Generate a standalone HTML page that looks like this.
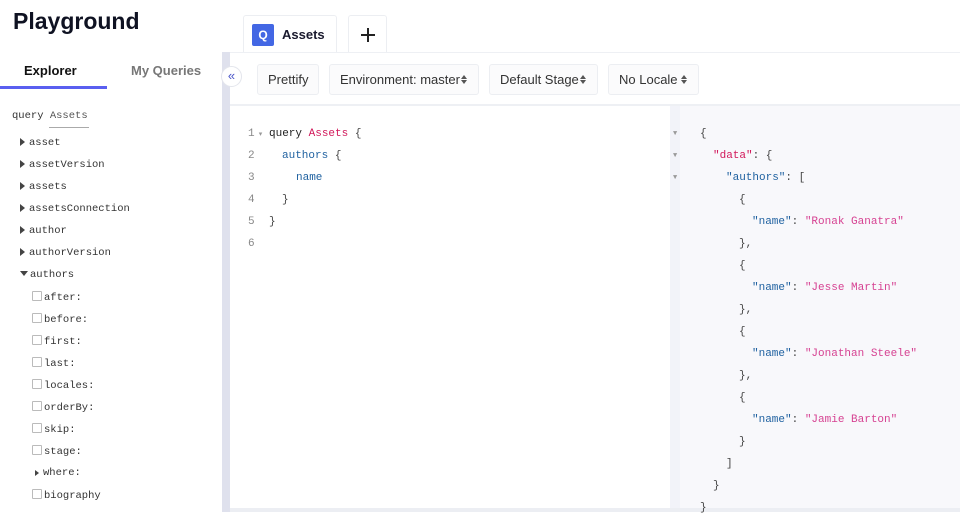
<!DOCTYPE html>
<html><head><style>
*{margin:0;padding:0;box-sizing:border-box}
body{width:960px;height:512px;overflow:hidden;background:#fff;font-family:"Liberation Sans",sans-serif;position:relative;color:#1a1a2e}
.abs{position:absolute}
.mono{font-family:"Liberation Mono",monospace}
.side{left:0;top:0;width:222px;height:512px;background:#fff}
h1{position:absolute;left:13px;top:8px;font-size:23px;font-weight:700;color:#0f1222}
.tab{position:absolute;top:63px;font-size:13px;font-weight:700}
.tree{position:absolute;left:0;top:0;font-size:10.5px;color:#333}
.tree div{position:absolute;white-space:nowrap}
.tri{display:inline-block;width:0;height:0;border-top:4px solid transparent;border-bottom:4px solid transparent;border-left:5px solid #444;margin-right:4px;vertical-align:-1px}
.trid{display:inline-block;width:0;height:0;border-left:4px solid transparent;border-right:4px solid transparent;border-top:5px solid #444;margin-right:2px;vertical-align:1px}
.cb{display:inline-block;width:10px;height:10px;border:1px solid #bbb;border-radius:1px;margin-right:2px;vertical-align:-1px}
.btn{position:absolute;top:64px;height:31px;border:1px solid #eceef2;border-radius:3px;background:#fbfbfc;font-size:13px;color:#333;line-height:29px;padding:0 10px;white-space:nowrap}
.ar{position:absolute;right:10px;top:10px;width:7px;height:10px}
.ar:before{content:"";position:absolute;left:0;top:0;border-left:3.5px solid transparent;border-right:3.5px solid transparent;border-bottom:4px solid #555}
.ar:after{content:"";position:absolute;left:0;top:5px;border-left:3.5px solid transparent;border-right:3.5px solid transparent;border-top:4px solid #555}
.code div{position:absolute;white-space:nowrap;font-size:11px;line-height:14px}
.num{color:#888}
.kw{color:#222}.def{color:#d1185a}.fld{color:#1f61a0}.str{color:#d64292}.pun{color:#444}
</style></head><body>
<div class="abs side">
<h1>Playground</h1>
<div class="tab" style="left:24px;color:#111">Explorer</div>
<div class="tab" style="left:131px;color:#777">My Queries</div>
<div class="abs" style="left:0;top:86px;width:107px;height:3px;background:#5a5ff0"></div>
<div class="tree mono">
<div style="left:12px;top:110px">query <span style="color:#555">Assets</span></div>
<div style="left:49px;top:127px;width:40px;height:1px;background:#aaa"></div>
<div style="left:20px;top:137px"><span class="tri"></span>asset</div>
<div style="left:20px;top:159px"><span class="tri"></span>assetVersion</div>
<div style="left:20px;top:181px"><span class="tri"></span>assets</div>
<div style="left:20px;top:203px"><span class="tri"></span>assetsConnection</div>
<div style="left:20px;top:225px"><span class="tri"></span>author</div>
<div style="left:20px;top:247px"><span class="tri"></span>authorVersion</div>
<div style="left:20px;top:269px"><span class="trid"></span>authors</div>
<div style="left:32px;top:291px"><span class="cb"></span>after:</div>
<div style="left:32px;top:313px"><span class="cb"></span>before:</div>
<div style="left:32px;top:335px"><span class="cb"></span>first:</div>
<div style="left:32px;top:357px"><span class="cb"></span>last:</div>
<div style="left:32px;top:379px"><span class="cb"></span>locales:</div>
<div style="left:32px;top:401px"><span class="cb"></span>orderBy:</div>
<div style="left:32px;top:423px"><span class="cb"></span>skip:</div>
<div style="left:32px;top:445px"><span class="cb"></span>stage:</div>
<div style="left:35px;top:467px"><span class="tri" style="border-top-width:3.5px;border-bottom-width:3.5px;border-left-width:4px"></span>where:</div>
<div style="left:32px;top:489px"><span class="cb"></span>biography</div>
</div>
</div>
<div class="abs" style="left:222px;top:52px;width:8px;height:460px;background:#dfe1ed"></div>
<div class="abs" style="left:221px;top:66px;width:21px;height:21px;border-radius:50%;background:#fff;border:1px solid #e3e5ec;font-size:13px;color:#4a55c8;text-align:center;line-height:18px">«</div>
<!-- tabs -->
<div class="abs" style="left:243px;top:15px;width:94px;height:38px;border:1px solid #eceef2;border-bottom:none;border-radius:3px 3px 0 0;background:#fff"></div>
<div class="abs" style="left:252px;top:24px;width:22px;height:22px;background:#4367e4;border-radius:2px;color:#fff;font-size:12px;font-weight:700;text-align:center;line-height:22px">Q</div>
<div class="abs" style="left:282px;top:27px;font-size:13px;font-weight:700">Assets</div>
<div class="abs" style="left:348px;top:15px;width:39px;height:38px;border:1px solid #eceef2;border-bottom:none;border-radius:3px 3px 0 0"></div>
<div class="abs" style="left:361px;top:34px;width:14px;height:2px;background:#222"></div>
<div class="abs" style="left:367px;top:28px;width:2px;height:14px;background:#222"></div>
<div class="abs" style="left:230px;top:52px;width:730px;height:1px;background:#eef0f4"></div>
<!-- toolbar -->
<div class="btn" style="left:257px;width:62px">Prettify</div>
<div class="btn" style="left:329px;width:150px">Environment: master<span class="ar"></span></div>
<div class="btn" style="left:489px;width:109px">Default Stage<span class="ar"></span></div>
<div class="btn" style="left:608px;width:91px">No Locale<span class="ar"></span></div>
<div class="abs" style="left:230px;top:104px;width:730px;height:2px;background:#eef0f4"></div>
<!-- result pane -->
<div class="abs" style="left:670px;top:106px;width:290px;height:406px;background:#f8f8fb"></div>
<div class="abs" style="left:670px;top:106px;width:10px;height:406px;background:#f2f3f9"></div>
<div class="abs" style="left:230px;top:508px;width:730px;height:4px;background:#eceef3"></div>
<div class="code mono">
<div style="left:248px;top:127px"><span class="num">1</span><span style="font-size:7px;color:#999"> ▾</span></div>
<div style="left:248px;top:149px" class="num">2</div>
<div style="left:248px;top:171px" class="num">3</div>
<div style="left:248px;top:193px" class="num">4</div>
<div style="left:248px;top:215px" class="num">5</div>
<div style="left:248px;top:237px" class="num">6</div>
<div style="left:269px;top:127px"><span class="kw">query</span> <span class="def">Assets</span> <span class="pun">{</span></div>
<div style="left:282px;top:149px"><span class="fld">authors</span> <span class="pun">{</span></div>
<div style="left:296px;top:171px"><span class="fld">name</span></div>
<div style="left:282px;top:193px" class="pun">}</div>
<div style="left:269px;top:215px" class="pun">}</div>
<div style="left:673px;top:127px;font-size:7px;color:#999">▼</div>
<div style="left:673px;top:149px;font-size:7px;color:#999">▼</div>
<div style="left:673px;top:171px;font-size:7px;color:#999">▼</div>
<div style="left:700px;top:127px" class="pun">{</div>
<div style="left:713px;top:149px"><span style="color:#d1185a">"data"</span><span class="pun">: {</span></div>
<div style="left:726px;top:171px"><span class="fld">"authors"</span><span class="pun">: [</span></div>
<div style="left:739px;top:193px" class="pun">{</div>
<div style="left:752px;top:215px"><span class="fld">"name"</span><span class="pun">: </span><span class="str">"Ronak Ganatra"</span></div>
<div style="left:739px;top:237px" class="pun">},</div>
<div style="left:739px;top:259px" class="pun">{</div>
<div style="left:752px;top:281px"><span class="fld">"name"</span><span class="pun">: </span><span class="str">"Jesse Martin"</span></div>
<div style="left:739px;top:303px" class="pun">},</div>
<div style="left:739px;top:325px" class="pun">{</div>
<div style="left:752px;top:347px"><span class="fld">"name"</span><span class="pun">: </span><span class="str">"Jonathan Steele"</span></div>
<div style="left:739px;top:369px" class="pun">},</div>
<div style="left:739px;top:391px" class="pun">{</div>
<div style="left:752px;top:413px"><span class="fld">"name"</span><span class="pun">: </span><span class="str">"Jamie Barton"</span></div>
<div style="left:739px;top:435px" class="pun">}</div>
<div style="left:726px;top:457px" class="pun">]</div>
<div style="left:713px;top:479px" class="pun">}</div>
<div style="left:700px;top:501px" class="pun">}</div>
</div>
</body></html>
